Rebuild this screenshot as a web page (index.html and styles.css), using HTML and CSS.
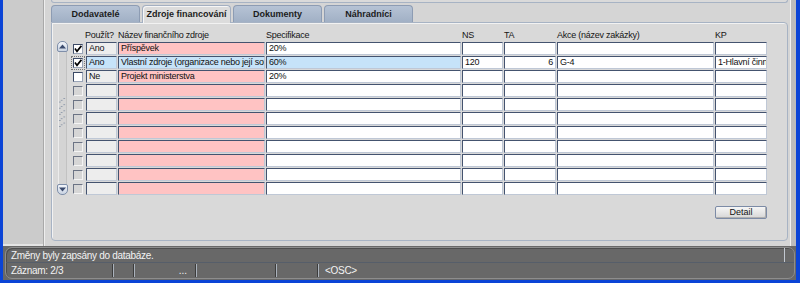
FILE: index.html
```html
<!DOCTYPE html>
<html lang="cs">
  <head>
    <meta charset="UTF-8" />
    <title>Zdroje financování</title>
    <link rel="stylesheet" href="styles.css">
  </head>

  <body>
    <div class="window">
      <div class="main">
        <div class="sidebar"></div>
        <div class="content">
          <div class="topbox"></div>
          <div class="tabs">
            <div class="tab">Dodavatelé</div>
            <div class="tab active">Zdroje financování</div>
            <div class="tab">Dokumenty</div>
            <div class="tab">Náhradníci</div>
          </div>
          <div class="panel">
            <div class="grid-wrap">
              <div class="scroller">
                <div class="sc-btn sc-up">
                  <svg width="7" height="5" viewBox="0 0 7 5"><polygon points="0,4.5 7,4.5 3.5,0.5" fill="#3b4b6e"/></svg>
                </div>
                <div class="sc-track">
                  <svg class="grip" width="8" height="34" viewBox="0 0 8 34">
                    <g fill="#8c97a8">
                      <rect x="5" y="0" width="2" height="1"/><rect x="2" y="2" width="2" height="1"/><rect x="0" y="4" width="2" height="1"/>
                      <rect x="5" y="7" width="2" height="1"/><rect x="2" y="9" width="2" height="1"/><rect x="0" y="11" width="2" height="1"/>
                      <rect x="5" y="14" width="2" height="1"/><rect x="2" y="16" width="2" height="1"/><rect x="0" y="18" width="2" height="1"/>
                      <rect x="5" y="21" width="2" height="1"/><rect x="2" y="23" width="2" height="1"/><rect x="0" y="25" width="2" height="1"/>
                      <rect x="5" y="28" width="2" height="1"/><rect x="2" y="30" width="2" height="1"/><rect x="0" y="32" width="2" height="1"/>
                    </g>
                  </svg>
                </div>
                <div class="sc-btn sc-down">
                  <svg width="7" height="5" viewBox="0 0 7 5"><polygon points="0,0.5 7,0.5 3.5,4.5" fill="#3b4b6e"/></svg>
                </div>
              </div>

              <div class="table">
                <div class="th"></div>
                <div class="th th-use">Použít?</div>
                <div class="th">Název finančního zdroje</div>
                <div class="th">Specifikace</div>
                <div class="th">NS</div>
                <div class="th">TA</div>
                <div class="th">Akce (název zakázky)</div>
                <div class="th">KP</div>

                <div class="chk-cell"><span class="chk on">
                  <svg width="8" height="8" viewBox="0 0 8 8"><polyline points="1,3.6 3,6.4 7.4,0.8" fill="none" stroke="#000" stroke-width="1.7"/></svg>
                </span></div>
                <div class="c use">Ano</div>
                <div class="c name">Příspěvek</div>
                <div class="c">20%</div>
                <div class="c"></div>
                <div class="c"></div>
                <div class="c"></div>
                <div class="c"></div>

                <div class="chk-cell focus"><span class="chk on">
                  <svg width="8" height="8" viewBox="0 0 8 8"><polyline points="1,3.6 3,6.4 7.4,0.8" fill="none" stroke="#000" stroke-width="1.7"/></svg>
                </span></div>
                <div class="c use sel">Ano</div>
                <div class="c name sel">Vlastní zdroje (organizace nebo její součásti)</div>
                <div class="c sel">60%</div>
                <div class="c">120</div>
                <div class="c num">6</div>
                <div class="c">G-4</div>
                <div class="c">1-Hlavní činnost</div>

                <div class="chk-cell"><span class="chk"></span></div>
                <div class="c use">Ne</div>
                <div class="c name">Projekt ministerstva</div>
                <div class="c">20%</div>
                <div class="c"></div>
                <div class="c"></div>
                <div class="c"></div>
                <div class="c"></div>
              </div>
            </div>

            <div class="actions">
              <button class="btn">Detail</button>
            </div>
          </div>
        </div>
        <div class="rightbar"></div>
      </div>

      <div class="status">
        <div class="status-box">
          <div class="status-msg">
            <span class="msg-text">Změny byly zapsány do databáze.</span>
            <span class="msg-end"></span>
          </div>
          <div class="status-fields">
            <span class="fld f1">Záznam: 2/3</span>
            <span class="fld f2"></span>
            <span class="fld f3">...</span>
            <span class="fld f4"></span>
            <span class="fld f5"></span>
            <span class="fld f6">&lt;OSC&gt;</span>
          </div>
        </div>
      </div>
    </div>

    <script>
      // doplní prázdné řádky tabulky
      const table = document.querySelector(".table");
      for (let i = 0; i < 8; i++) {
        let row = '<div class="chk-cell"><span class="chk off"></span></div>';
        row += '<div class="c use"></div><div class="c name"></div>';
        for (let j = 0; j < 5; j++) {
          row += '<div class="c"></div>';
        }
        table.insertAdjacentHTML("beforeend", row);
      }
    </script>
  </body>
</html>
```

FILE: styles.css
```css
* {
  box-sizing: border-box;
}

body {
  margin: 0;
  width: 800px;
  height: 283px;
  overflow: hidden;
  background-color: #0b44d6;
  font-family: "Liberation Sans", Arial, sans-serif;
  color: #111;
}

.window {
  margin: 0 4px 0 3px;
  height: 280px;
  display: flex;
  flex-direction: column;
}

.main {
  height: 246px;
  display: flex;
}
.sidebar {
  width: 42px;
  background-color: #cbcbcb;
  border-right: 1px solid #eeeeee;
  box-shadow: inset -1px 0 #a9a9a9, inset 0 -2px #e4e4e4;
}
.content {
  flex: 1;
  background-color: #d5d5d5;
  padding: 0 2px 0 6px;
}
.rightbar {
  width: 6px;
  background-color: #bcbcbc;
  border-left: 1px solid #f2f2f2;
}

.topbox {
  height: 3px;
  border: 1px solid #a7b3c4;
  border-top: none;
  border-radius: 0 0 3px 3px;
  background-color: #dadada;
}

.tabs {
  display: flex;
  gap: 2px;
  margin-top: 2px;
  height: 17px;
  position: relative;
  z-index: 1;
}
.tab {
  width: 89px;
  height: 17px;
  background: linear-gradient(#b6c3d5, #a1b0c5);
  border: 1px solid #8d9cb3;
  border-bottom: none;
  border-radius: 4px 4px 0 0;
  font-size: 9px;
  font-weight: bold;
  line-height: 16px;
  text-align: center;
  color: #1c1c1c;
}
.tab.active {
  height: 18px;
  background: #dcdcdc;
  border-color: #a3afc1;
  box-shadow: inset 1px 1px #f6f6f6;
}

.panel {
  height: 219px;
  border: 1px solid #a7b3c4;
  border-radius: 0 4px 4px 4px;
  background-color: #d9d9d9;
  box-shadow: inset 1px 1px #f2f2f2;
  padding: 7px 20px 0 5px;
}

.grid-wrap {
  display: flex;
}

.scroller {
  width: 11px;
  height: 154px;
  margin-top: 11px;
  margin-right: 3px;
  display: flex;
  flex-direction: column;
}
.sc-btn {
  height: 11px;
  border: 1px solid #7e8ea9;
  background: linear-gradient(#f2f5fa, #c9d3e2);
  display: flex;
  justify-content: center;
  align-items: center;
}
.sc-up {
  border-radius: 5px 5px 2px 2px;
}
.sc-down {
  border-radius: 2px 2px 5px 5px;
}
.sc-track {
  flex: 1;
  margin: 0 1px;
  border-left: 1px solid #ececec;
  border-right: 1px solid #c2c2c2;
  background-color: #d4d4d4;
  display: flex;
  justify-content: center;
  align-items: center;
  padding-bottom: 10px;
}

.table {
  display: grid;
  grid-template-columns: 14px 31px 147px 195px 41px 52px 157px 52px;
  grid-template-rows: 11px;
  grid-auto-rows: 13px;
  column-gap: 1px;
  row-gap: 1px;
}
.th {
  font-size: 9px;
  line-height: 10px;
  letter-spacing: -0.25px;
  white-space: nowrap;
  color: #151515;
}
.th-use {
  margin-left: -1px;
}

.c {
  background-color: #ffffff;
  border-top: 1px solid #44536f;
  border-left: 1px solid #44536f;
  border-right: 1px solid #bfc8d6;
  border-bottom: 1px solid #bfc8d6;
  font-size: 9px;
  line-height: 11px;
  letter-spacing: -0.25px;
  padding: 0 2px;
  white-space: nowrap;
  overflow: hidden;
  text-overflow: clip;
}
.c.use {
  background-color: #ededed;
}
.c.name {
  background-color: #ffc3c3;
}
.c.sel {
  background-color: #c6e3f9;
}
.c.num {
  text-align: right;
}

.chk-cell {
  display: flex;
  align-items: center;
  padding-left: 2px;
}
.chk-cell.focus .chk {
  outline: 1px dotted #777;
  outline-offset: 1px;
}
.chk {
  width: 10px;
  height: 10px;
  background-color: #ffffff;
  border-top: 1px solid #3c4a66;
  border-left: 1px solid #3c4a66;
  border-right: 1px solid #9aa5b8;
  border-bottom: 1px solid #9aa5b8;
  display: flex;
  justify-content: center;
  align-items: center;
}
.chk.off {
  background-color: #d6d6d6;
  border-top-color: #6b7384;
  border-left-color: #6b7384;
  border-right-color: #f4f4f4;
  border-bottom-color: #f4f4f4;
}

.actions {
  display: flex;
  justify-content: flex-end;
  margin-top: 11px;
}
.btn {
  width: 52px;
  height: 13px;
  padding: 0;
  border: 1px solid #7c8ba6;
  border-radius: 2px;
  background: linear-gradient(#f6f6f6, #d6d6d6);
  box-shadow: inset -1px -1px #b0b0b0;
  font-family: "Liberation Sans", Arial, sans-serif;
  font-size: 9px;
  line-height: 11px;
  color: #111;
}

.status {
  height: 34px;
  background-color: #686868;
  padding: 1px 1px 1px 2px;
}
.status-box {
  height: 32px;
  border: 1px solid #8d8d8d;
  border-radius: 7px;
  box-shadow: inset 1px 1px #4d4d4d;
  color: #f3f3f3;
  font-size: 10px;
  letter-spacing: -0.3px;
}
.status-msg {
  height: 15px;
  display: flex;
  border-bottom: 1px solid #565e6a;
}
.msg-text {
  flex: 1;
  padding-left: 5px;
  line-height: 15px;
}
.msg-end {
  width: 10px;
  border-left: 1px solid #c2c8d0;
}
.status-fields {
  display: flex;
  height: 15px;
  line-height: 14px;
}
.fld {
  border-right: 1px solid #3c3c3c;
  box-shadow: 1px 0 #aab2bc;
  margin: 1px 0 1px;
}
.f1 {
  width: 107px;
  padding-left: 5px;
}
.f2 {
  width: 21px;
}
.f3 {
  width: 62px;
  text-align: right;
  padding-right: 8px;
  letter-spacing: 0;
}
.f4 {
  width: 80px;
}
.f5 {
  width: 42px;
}
.f6 {
  border-right: none;
  box-shadow: none;
  padding-left: 7px;
}
```
